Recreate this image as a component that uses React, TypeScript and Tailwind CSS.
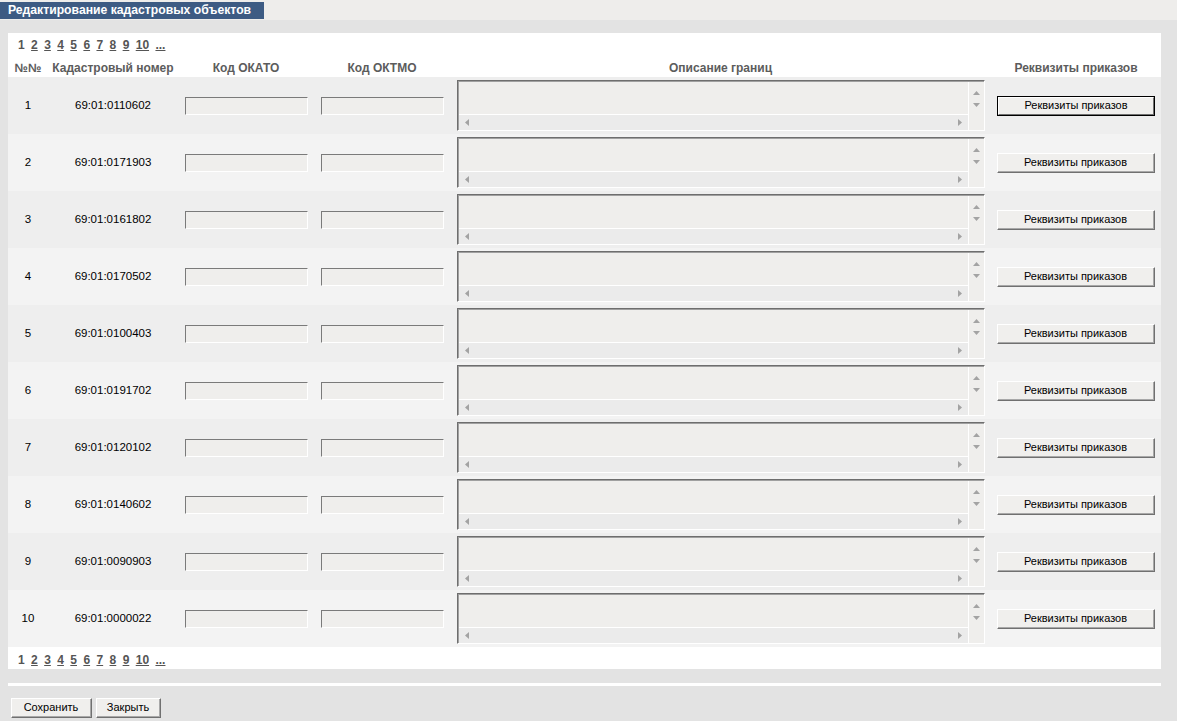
import React from "react";

const rows = [
  "69:01:0110602",
  "69:01:0171903",
  "69:01:0161802",
  "69:01:0170502",
  "69:01:0100403",
  "69:01:0191702",
  "69:01:0120102",
  "69:01:0140602",
  "69:01:0090903",
  "69:01:0000022",
];

const cols = "grid grid-cols-[40px_130px_136px_136px_541px_170px]";

function Pager() {
  return (
    <div className="flex h-[14px] items-center gap-[6.4px] pl-[10px] text-[12px] font-bold text-[#555]">
      <span>1</span>
      {["2", "3", "4", "5", "6", "7", "8", "9", "10", "..."].map((p) => (
        <a key={p} className="underline cursor-pointer">
          {p}
        </a>
      ))}
    </div>
  );
}

function Arrow({ dir }: { dir: "up" | "down" | "left" | "right" }) {
  const pts = {
    up: "0,4 3.5,0 7,4",
    down: "0,0 3.5,4 7,0",
    left: "4,0 0,3.5 4,7",
    right: "0,0 4,3.5 0,7",
  }[dir];
  const vert = dir === "up" || dir === "down";
  return (
    <svg width={vert ? 7 : 4} height={vert ? 4 : 7} viewBox={vert ? "0 0 7 4" : "0 0 4 7"}>
      <polygon points={pts} fill="#a3a3a3" />
    </svg>
  );
}

function Field() {
  return (
    <div className="h-[18px] w-[123px] border border-t-[#7a7a7a] border-l-[#7a7a7a] border-b-white border-r-white bg-[#efeeec]" />
  );
}

function Memo() {
  return (
    <div className="flex h-[51px] w-[528px] flex-col border border-t-[#6e6e6e] border-l-[#6e6e6e] border-b-white border-r-white bg-[#efeeec]">
      <div className="flex flex-1 border-t border-l border-t-[#a0a0a0] border-l-[#a0a0a0]">
        <div className="flex flex-1 flex-col">
          <div className="flex-1" />
          <div className="flex h-[16px] items-center justify-between border-t border-white bg-[#ebebeb] px-[6px]">
            <Arrow dir="left" />
            <Arrow dir="right" />
          </div>
        </div>
        <div className="flex w-[16px] flex-col border-l border-white">
          <div className="flex flex-1 flex-col items-center justify-center gap-[8px] pt-[2px]">
            <Arrow dir="up" />
            <Arrow dir="down" />
          </div>
          <div className="h-[16px] bg-[#efeeec]" />
        </div>
      </div>
    </div>
  );
}

function Btn({ label, w, focus }: { label: string; w: string; focus?: boolean }) {
  return (
    <button
      className={`${w} h-[20px] ${
        focus ? "border border-black" : "border border-t-white border-l-white border-b-[#707070] border-r-[#707070]"
      } bg-[#f0efed] text-[11px] text-black`}
    >
      <div
        className={`flex h-full items-center justify-center ${
          focus ? "border border-t-white border-l-white border-b-[#707070] border-r-[#707070]" : "border-b border-r border-b-[#a8a8a8] border-r-[#a8a8a8]"
        }`}
      >
        {label}
      </div>
    </button>
  );
}

export default function App() {
  return (
    <div className="h-[721px] w-[1177px] bg-[#e3e3e3] font-['Liberation_Sans',Arial,sans-serif] text-[11.5px] text-black">
      <div className="h-[20px] bg-[#eeedeb] pt-[2px]">
        <div className="flex h-[17px] w-[264px] items-center bg-[#3d5b83] pl-[8px] text-[12.2px] font-bold text-white">
          Редактирование кадастровых объектов
        </div>
      </div>

      <div className="pl-[8px] pr-[16px] pt-[13px]">
        <div className="bg-white">
          <div className="pt-[5px]">
            <Pager />
          </div>
          <div className={`${cols} h-[25px] items-start pt-[7px] text-center text-[12px] font-bold text-[#5c5c5c]`}>
            <div>№№</div>
            <div>Кадастровый номер</div>
            <div>Код ОКАТО</div>
            <div>Код ОКТМО</div>
            <div>Описание границ</div>
            <div>Реквизиты приказов</div>
          </div>
          {rows.map((num, i) => (
            <div
              key={num}
              className={`${cols} h-[57px] items-center ${i % 2 === 0 ? "bg-[#eeeeee]" : "bg-[#f3f3f3]"}`}
            >
              <div className="text-center">{i + 1}</div>
              <div className="text-center">{num}</div>
              <div className="flex justify-center">
                <Field />
              </div>
              <div className="flex justify-center">
                <Field />
              </div>
              <div className="flex justify-center">
                <Memo />
              </div>
              <div className="flex justify-center">
                <Btn label="Реквизиты приказов" w="w-[158px]" focus={i === 0} />
              </div>
            </div>
          ))}
          <div className="h-[22px] pt-[6px]">
            <Pager />
          </div>
        </div>

        <div className="mt-[14px] h-[3px] bg-white" />

        <div className="flex gap-[4px] pl-[3px] pt-[12px]">
          <Btn label="Сохранить" w="w-[81px]" />
          <Btn label="Закрыть" w="w-[65px]" />
        </div>
      </div>
    </div>
  );
}
